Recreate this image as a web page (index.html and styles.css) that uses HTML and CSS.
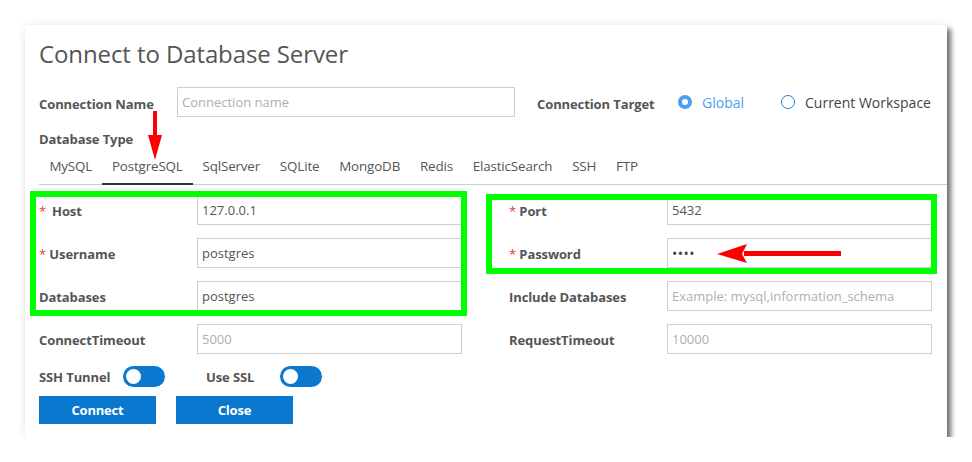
FILE: index.html
```html
<!DOCTYPE html>
<html lang="en">
<head>
<meta charset="utf-8">
<title>Connect to Database Server</title>
<link rel="stylesheet" href="styles.css">
</head>
<body>
<div class="dialog">
  <h1 class="title">Connect to Database Server</h1>

  <div class="top-row">
    <div class="name-field">
      <label class="label name-label">Connection Name</label>
      <input class="input name-input" type="text" placeholder="Connection name">
    </div>
    <div class="target-field">
      <label class="label target-label">Connection Target</label>
      <span class="radio checked"><span class="radio-dot"></span><span class="radio-text">Global</span></span>
      <span class="radio"><span class="radio-dot"></span><span class="radio-text">Current Workspace</span></span>
    </div>
  </div>

  <div class="label dbtype">Database Type</div>
  <div class="tabs">
    <span class="tab">MySQL</span>
    <span class="tab active">PostgreSQL</span>
    <span class="tab">SqlServer</span>
    <span class="tab">SQLite</span>
    <span class="tab">MongoDB</span>
    <span class="tab">Redis</span>
    <span class="tab">ElasticSearch</span>
    <span class="tab">SSH</span>
    <span class="tab">FTP</span>
  </div>

  <div class="grid">
    <div class="field"><label class="label"><span class="req">*</span><span class="host-gap"></span>Host</label><input class="input" type="text" value="127.0.0.1"></div>
    <div class="field"><label class="label label-right"><span class="req">*</span> Port</label><input class="input" type="text" value="5432"></div>
    <div class="field"><label class="label"><span class="req">*</span> Username</label><input class="input" type="text" value="postgres"></div>
    <div class="field"><label class="label label-right"><span class="req">*</span> Password</label><input class="input pass" type="password" value="1234"></div>
    <div class="field"><label class="label">Databases</label><input class="input" type="text" value="postgres"></div>
    <div class="field"><label class="label label-right">Include Databases</label><input class="input" type="text" placeholder="Example: mysql,information_schema"></div>
    <div class="field"><label class="label">ConnectTimeout</label><input class="input" type="text" placeholder="5000"></div>
    <div class="field"><label class="label label-right">RequestTimeout</label><input class="input" type="text" placeholder="10000"></div>
  </div>

  <div class="toggles">
    <span class="label toggle-label ssh">SSH Tunnel</span>
    <span class="switch"><span class="knob"></span></span>
    <span class="label toggle-label ssl">Use SSL</span>
    <span class="switch"><span class="knob"></span></span>
  </div>

  <div class="buttons">
    <button class="btn">Connect</button>
    <button class="btn">Close</button>
  </div>

  <div class="mark mark-left"></div>
  <div class="mark mark-right"></div>
  <svg class="arrow arrow-down" width="16" height="50" viewBox="0 0 16 50">
    <rect x="6" y="0" width="4" height="26" fill="#ff0000"/>
    <polygon points="1,24 15,24 8,49" fill="#ff0000"/>
  </svg>
  <svg class="arrow arrow-left" width="126" height="20" viewBox="0 0 126 20">
    <rect x="28" y="7" width="97" height="5" fill="#ff0000"/>
    <polygon points="1,10 31,0 26,10 31,19" fill="#ff0000"/>
  </svg>
</div>
</body>
</html>
```
FILE: styles.css
```css
* { box-sizing: border-box; }

html, body {
  margin: 0;
  padding: 0;
  background: #ffffff;
}

body {
  padding: 25px 0 0 25px;
  font-family: "Open Sans", "Noto Sans", "Liberation Sans", sans-serif;
  color: #555555;
}

.dialog {
  position: relative;
  width: 922px;
  height: 412px;
  background: #ffffff;
  padding: 13px 0 0 14px;
  box-shadow: 4px 4px 5px rgba(0, 0, 0, 0.55), 0 0 10px rgba(0, 0, 0, 0.07);
}

.title {
  margin: 0;
  font-size: 24px;
  line-height: 32px;
  font-weight: 400;
  color: #555555;
  letter-spacing: -0.1px;
}

.label {
  font-size: 13px;
  font-weight: 700;
  color: #555555;
  line-height: 20px;
  letter-spacing: -0.1px;
}

.top-row {
  display: flex;
  align-items: center;
  margin-top: 17px;
  height: 30px;
}

.top-row .label {
  margin-top: 4px;
}

.name-field {
  display: flex;
  align-items: center;
}

.name-label {
  width: 138px;
}

.name-field .name-input {
  width: 338px;
}

.target-field {
  display: flex;
  align-items: center;
  margin-left: 22px;
}

.target-label {
  width: 141px;
}

.radio {
  display: flex;
  align-items: center;
  font-size: 14px;
  color: #444444;
}

.radio + .radio {
  margin-left: 37px;
}

.radio-dot {
  width: 14px;
  height: 14px;
  border-radius: 50%;
  border: 1.5px solid #1a7fd4;
  margin-right: 10px;
  background: #ffffff;
}

.radio.checked .radio-dot {
  border: 4.5px solid #4ca0f2;
  background: #ffffff;
}

.radio.checked .radio-text {
  color: #4ca0f2;
}

.dbtype {
  margin-top: 12px;
}

.tabs {
  display: flex;
  border-bottom: 1px solid #cccccc;
  height: 36px;
}

.tab {
  font-size: 13.4px;
  line-height: 20px;
  padding: 7px 9.9px 7px 9.9px;
  color: #555555;
  letter-spacing: -0.15px;
}

.tab:first-child {
  margin-left: 0.5px;
}

.tab.active {
  border-bottom: 2px solid #333333;
  height: 36px;
  padding-bottom: 7px;
}

.grid {
  display: grid;
  grid-template-columns: 423px 423px;
  column-gap: 47px;
  row-gap: 13px;
  margin-top: 10px;
}

.field {
  display: flex;
  align-items: center;
  height: 30px;
}

.field .label {
  width: 158px;
  margin-top: 2px;
}

.req {
  color: #e53935;
  font-weight: 400;
}

.host-gap {
  display: inline-block;
  width: 6px;
}

.input {
  width: 265px;
  height: 30px;
  border: 1px solid #cfcfcf;
  border-radius: 0;
  padding: 0 4px;
  font-family: "Open Sans", "Noto Sans", "Liberation Sans", sans-serif;
  font-size: 13px;
  color: #555555;
  background: #ffffff;
  outline: none;
}

.input::placeholder {
  color: #a9b0b8;
}

.input.pass {
  font-size: 14px;
  letter-spacing: 0.5px;
  color: #444444;
}

.toggles {
  display: flex;
  align-items: center;
  margin-top: 12px;
  height: 21px;
}

.toggle-label.ssh {
  width: 84px;
}

.toggle-label.ssl {
  width: 74px;
  margin-left: 41px;
}

.switch {
  display: flex;
  align-items: center;
  width: 42px;
  height: 21px;
  border-radius: 11px;
  background: #0a78cf;
  padding-left: 3px;
}

.knob {
  width: 15px;
  height: 15px;
  border-radius: 50%;
  background: #ffffff;
}

.buttons {
  display: flex;
  gap: 20px;
  margin-top: 9px;
}

.btn {
  width: 117px;
  height: 28px;
  border: none;
  border-radius: 0;
  background: #0a78cf;
  color: #ffffff;
  font-family: "Open Sans", "Noto Sans", "Liberation Sans", sans-serif;
  font-size: 13px;
  font-weight: 700;
  letter-spacing: -0.2px;
  padding: 0;
}

/* annotation overlays */
.mark {
  position: absolute;
  border: 6px solid #00ff00;
}

.mark-left {
  left: 5px;
  top: 166px;
  width: 437px;
  height: 125px;
}

.mark-right {
  left: 461px;
  top: 169px;
  width: 451px;
  height: 80px;
}

.arrow {
  position: absolute;
  display: block;
}

.arrow-down {
  left: 122px;
  top: 86px;
}

.arrow-left {
  left: 691px;
  top: 219px;
}
```
